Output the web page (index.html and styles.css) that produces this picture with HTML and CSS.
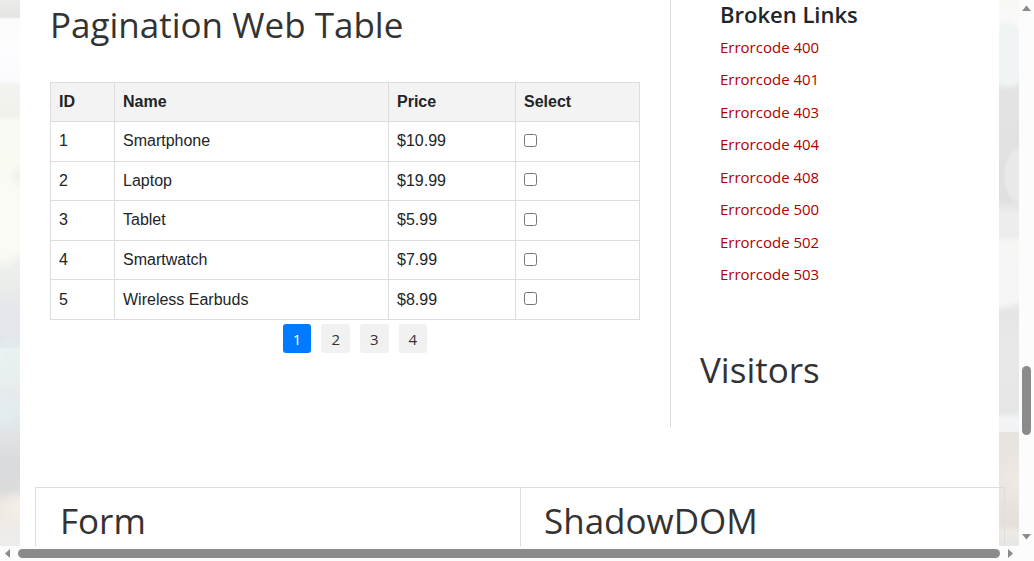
FILE: index.html
```html
<!DOCTYPE html>
<html lang="en">
<head>
<meta charset="utf-8">
<title>Pagination Web Table</title>
<link rel="stylesheet" href="styles.css">
</head>
<body>
<div class="window">
  <div class="viewport">
    <div class="backdrop backdrop-left"></div>
    <div class="content">
      <div class="columns">
        <main class="main">
          <h2 class="title">Pagination Web Table</h2>
          <table class="products">
            <colgroup><col class="col-id"><col class="col-name"><col class="col-price"><col class="col-select"></colgroup>
            <thead>
              <tr><th>ID</th><th>Name</th><th>Price</th><th>Select</th></tr>
            </thead>
            <tbody>
              <tr><td>1</td><td>Smartphone</td><td>$10.99</td><td><input type="checkbox" aria-label="Select Smartphone"></td></tr>
              <tr><td>2</td><td>Laptop</td><td>$19.99</td><td><input type="checkbox" aria-label="Select Laptop"></td></tr>
              <tr><td>3</td><td>Tablet</td><td>$5.99</td><td><input type="checkbox" aria-label="Select Tablet"></td></tr>
              <tr><td>4</td><td>Smartwatch</td><td>$7.99</td><td><input type="checkbox" aria-label="Select Smartwatch"></td></tr>
              <tr><td>5</td><td>Wireless Earbuds</td><td>$8.99</td><td><input type="checkbox" aria-label="Select Wireless Earbuds"></td></tr>
            </tbody>
          </table>
          <ul class="pagination">
            <li><a class="page active" href="#1">1</a></li>
            <li><a class="page" href="#2">2</a></li>
            <li><a class="page" href="#3">3</a></li>
            <li><a class="page" href="#4">4</a></li>
          </ul>
        </main>
        <aside class="sidebar">
          <h4 class="links-title">Broken Links</h4>
          <ul class="links">
            <li><a href="#400">Errorcode 400</a></li>
            <li><a href="#401">Errorcode 401</a></li>
            <li><a href="#403">Errorcode 403</a></li>
            <li><a href="#404">Errorcode 404</a></li>
            <li><a href="#408">Errorcode 408</a></li>
            <li><a href="#500">Errorcode 500</a></li>
            <li><a href="#502">Errorcode 502</a></li>
            <li><a href="#503">Errorcode 503</a></li>
          </ul>
          <h2 class="title visitors">Visitors</h2>
        </aside>
      </div>
      <div class="panels">
        <section class="panel"><h2 class="title">Form</h2></section>
        <section class="panel"><h2 class="title">ShadowDOM</h2></section>
      </div>
    </div>
    <div class="backdrop backdrop-right"></div>
  </div>
  <div class="scrollbar vertical">
    <svg class="arrow" width="15" height="15" viewBox="0 0 15 15"><path d="M3 11L7.500 5.500L12 11Z"/></svg>
    <div class="track"><div class="thumb"></div></div>
    <svg class="arrow" width="15" height="15" viewBox="0 0 15 15"><path d="M3 3L7.500 8.500L12 3Z"/></svg>
  </div>
  <div class="scrollbar horizontal">
    <svg class="arrow" width="15" height="15" viewBox="0 0 15 15"><path d="M10 3L5 7.500L10 12Z"/></svg>
    <div class="track"><div class="thumb"></div></div>
    <svg class="arrow" width="15" height="15" viewBox="0 0 15 15"><path d="M4 3L9 7.500L4 12Z"/></svg>
  </div>
</div>
</body>
</html>
```
FILE: styles.css
```css
* { box-sizing: border-box; }

body {
  margin: 0;
  color: #212529;
  font: 16px/24px "Liberation Sans", Arial, sans-serif;
}

h2, h4, ul { margin: 0; padding: 0; }
ul { list-style: none; }

.window {
  display: grid;
  grid-template: minmax(0, 1fr) 15px / minmax(0, 1fr) 15px;
  height: 100vh;
  background: #fcfcfc;
}

.viewport {
  display: grid;
  grid-template-columns: 20px minmax(0, 1fr) 20px;
  overflow: hidden;
}

.backdrop-left {
  background:
    radial-gradient(ellipse 22px 50px at 4px 222px, #fbfbf6 60%, transparent),
    radial-gradient(ellipse 12px 15px at 20px 176px, #eff1ea, transparent),
    radial-gradient(ellipse 18px 28px at 10px 360px, #e6eff1, transparent),
    radial-gradient(ellipse 16px 22px at 2px 412px, #e2edef, transparent),
    radial-gradient(ellipse 20px 20px at 20px 508px, #f5efe8, transparent),
    linear-gradient(#ececea 0, #e4e6e3 17px, #fafbfa 19px, #fdfdff 50px, #fafafd 82px, #f3f4f0 84px, #f0f1eb 115px, #fafaf4 122px, #fafaf3 250px, #edf0ec 262px, #e9ece9 290px, #e6e7ec 305px, #e1e6ea 347px, #edf4f2 349px, #e6e9ed 400px, #e4edef 403px, #dfe2e5 440px, #d9dbdd 460px, #dcdcdc 490px, #efe9e3 505px, #eeeceb 546px);
}

.backdrop-right {
  background:
    radial-gradient(ellipse 22px 36px at 8px 54px, #f0f4f5 80%, transparent),
    radial-gradient(ellipse 16px 30px at 20px 175px, #e9e9e9 80%, transparent),
    radial-gradient(ellipse 26px 30px at 0 282px, #f5f5f5 70%, transparent),
    radial-gradient(ellipse 20px 28px at 18px 482px, #eee9e3, transparent),
    linear-gradient(#f8f8f5 0, #fafaf9 28px, #f4f6f1 30px, #ecefef 80px, #e3e3e3 90px, #e0e0e0 200px, #ededee 213px, #eeeced 236px, #f6f6f4 242px, #f4f4f4 300px, #e5e5e5 310px, #e8e8e8 350px, #e5e6e6 412px, #f3f4f6 419px, #f1f2f4 432px, #e7e4df 432px, #ebe5df 480px, #e5e0da 525px, #edeae3 532px, #e7e7e6 546px);
}

.content {
  isolation: isolate;
  z-index: 1;
  background: #fff;
}

.columns {
  display: grid;
  grid-template-columns: 650px minmax(0, 1fr);
  min-height: 427px;
}

.main { padding: 3px 10px 0 30px; }

.title {
  color: #333;
  font: 400 35px/44px "Open Sans", sans-serif;
}

.products {
  width: calc(100% - 20px);
  height: 238px;
  margin-top: 35px;
  border-collapse: collapse;
  table-layout: fixed;
}

.col-id { width: 64px; }
.col-price { width: 127px; }
.col-select { width: 124px; }

.products th, .products td {
  padding: 7px 8px;
  border: 1px solid #ddd;
  text-align: left;
}

.products th { background: #f3f3f3; }

.products input {
  display: block;
  width: 13px;
  height: 13px;
  margin: 0 0 2px;
}

.pagination {
  display: flex;
  justify-content: center;
  gap: 10px;
  margin-top: 4px;
}

.page {
  display: block;
  padding: 1px 10px 0;
  border-radius: 3px;
  background: #f1f1f1;
  color: #333;
  font: 15px/28px "Open Sans", sans-serif;
  text-decoration: none;
}

.page.active { background: #007bff; color: #fff; }

.sidebar {
  padding-left: 29px;
  border-left: 1px solid #ddd;
}

.links-title {
  padding-left: 20px;
  font: 600 22px/28px "Open Sans", sans-serif;
}

.links {
  display: grid;
  align-content: space-between;
  height: 259px;
  margin-top: 3px;
  padding-left: 20px;
}

.links a {
  display: block;
  color: #b00000;
  font: 15px/32px "Open Sans", sans-serif;
  text-decoration: none;
}

.visitors { margin-top: 58px; }

.panels {
  display: grid;
  grid-template-columns: 1fr 1fr;
  margin: 60px -6px 0 15px;
  border: 1px solid #ddd;
}

.panel {
  height: 200px;
  padding: 11px 24px;
}

.panel + .panel {
  padding-left: 23px;
  border-left: 1px solid #ddd;
}

.scrollbar { display: flex; background: #fcfcfc; }
.vertical { flex-direction: column; }
.horizontal { grid-column: 1; }

.arrow { flex: none; fill: #8b8b8b; }
.track { display: flex; flex: 1; }
.thumb { border-radius: 5px; background: #8b8b8b; }

.vertical .track { flex-direction: column; padding: 351px 3px 0; }
.vertical .thumb { height: 69px; }
.horizontal .track { padding: 3px 4px 3px 3px; }
.horizontal .thumb { flex: 1; }
```
